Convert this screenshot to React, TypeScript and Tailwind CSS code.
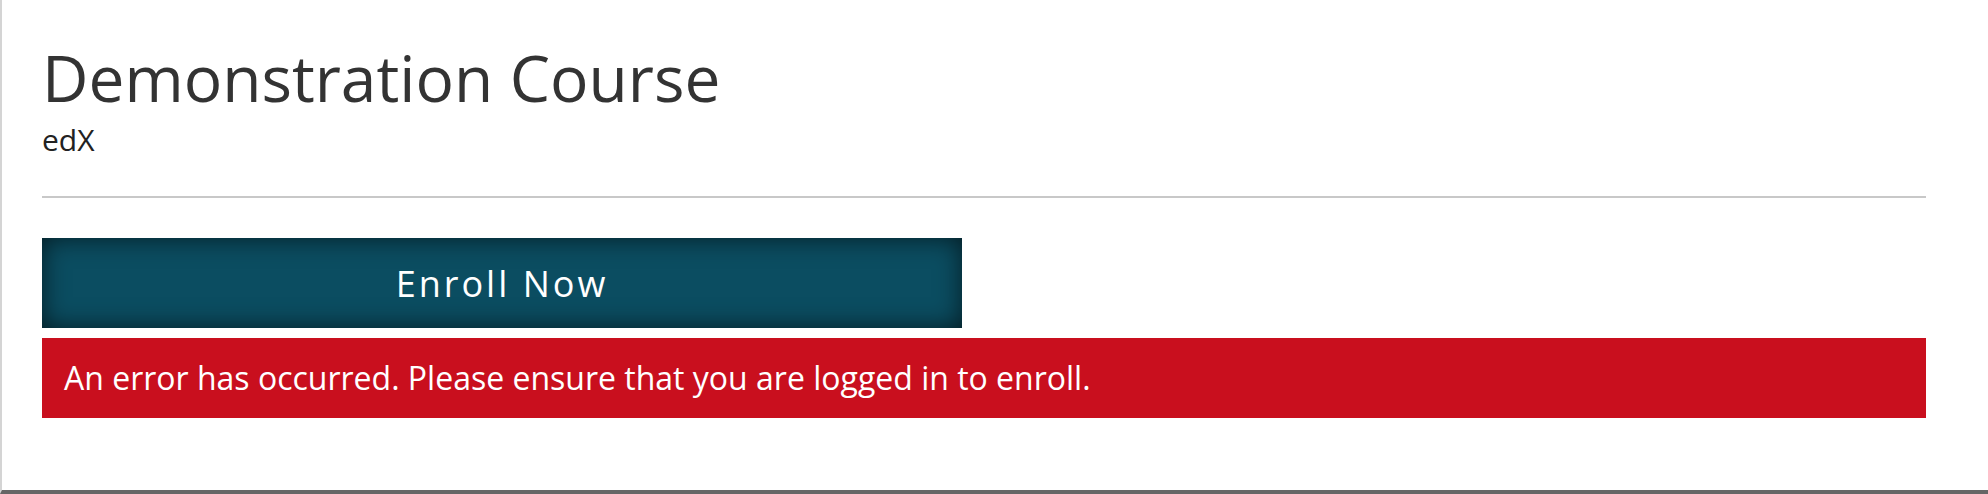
import React from "react";

const font = { fontFamily: '"Open Sans", "Liberation Sans", sans-serif' };

const App = () => {
  return (
    <div
      className="h-[494px] w-full bg-white border-l-2 border-b-4 border-l-[#d4d4d4] border-b-[#666666] pl-[40px] pr-[62px] pt-[40px]"
      style={font}
    >
      <header>
        <h1 className="text-[64px] leading-[1.2] text-[#333333] font-normal">
          Demonstration Course
        </h1>
        <p className="mt-[5px] text-[30px] leading-[1.2] text-[#222222]">edX</p>
      </header>

      <hr className="mt-[38px] border-0 h-[2px] bg-[#c8c8c8]" />

      <div className="mt-[40px]">
        <button className="w-[920px] h-[90px] flex items-center justify-center pt-[2px] bg-[#0b4d61] shadow-[inset_0_0_26px_rgba(0,0,0,0.65)] text-white text-[36px] tracking-[3px]">
          Enroll Now
        </button>
        <div className="mt-[10px] h-[80px] flex items-center bg-[#c90f1e] pl-[22px] text-white text-[32px]">
          An error has occurred. Please ensure that you are logged in to enroll.
        </div>
      </div>
    </div>
  );
};

export default App;
